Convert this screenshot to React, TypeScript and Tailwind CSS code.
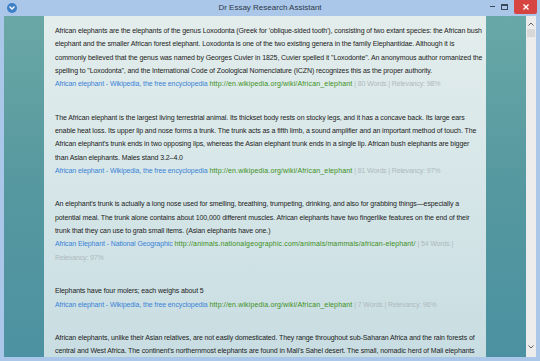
import React from "react"

interface Result {
  lines: string[]
  title: string
  url: string
  words: number
  relevancy: number
  wrapMeta?: boolean
}

const results: Result[] = [
  {
    lines: [
      "African elephants are the elephants of the genus Loxodonta (Greek for 'oblique-sided tooth'), consisting of two extant species: the African bush",
      "elephant and the smaller African forest elephant. Loxodonta is one of the two existing genera in the family Elephantidae. Although it is",
      "commonly believed that the genus was named by Georges Cuvier in 1825, Cuvier spelled it \"Loxodonte\". An anonymous author romanized the",
      "spelling to \"Loxodonta\", and the International Code of Zoological Nomenclature (ICZN) recognizes this as the proper authority.",
    ],
    title: "African elephant - Wikipedia, the free encyclopedia",
    url: "http://en.wikipedia.org/wiki/African_elephant",
    words: 80,
    relevancy: 98,
  },
  {
    lines: [
      "The African elephant is the largest living terrestrial animal. Its thickset body rests on stocky legs, and it has a concave back. Its large ears",
      "enable heat loss. Its upper lip and nose forms a trunk. The trunk acts as a fifth limb, a sound amplifier and an important method of touch. The",
      "African elephant's trunk ends in two opposing lips, whereas the Asian elephant trunk ends in a single lip. African bush elephants are bigger",
      "than Asian elephants. Males stand 3.2–4.0",
    ],
    title: "African elephant - Wikipedia, the free encyclopedia",
    url: "http://en.wikipedia.org/wiki/African_elephant",
    words: 81,
    relevancy: 97,
  },
  {
    lines: [
      "An elephant's trunk is actually a long nose used for smelling, breathing, trumpeting, drinking, and also for grabbing things—especially a",
      "potential meal. The trunk alone contains about 100,000 different muscles. African elephants have two fingerlike features on the end of their",
      "trunk that they can use to grab small items. (Asian elephants have one.)",
    ],
    title: "African Elephant - National Geographic",
    url: "http://animals.nationalgeographic.com/animals/mammals/african-elephant/",
    words: 54,
    relevancy: 97,
    wrapMeta: true,
  },
  {
    lines: ["Elephants have four molers; each weighs about 5"],
    title: "African elephant - Wikipedia, the free encyclopedia",
    url: "http://en.wikipedia.org/wiki/African_elephant",
    words: 7,
    relevancy: 96,
  },
  {
    lines: [
      "African elephants, unlike their Asian relatives, are not easily domesticated. They range throughout sub-Saharan Africa and the rain forests of",
      "central and West Africa. The continent's northernmost elephants are found in Mali's Sahel desert. The small, nomadic herd of Mali elephants",
    ],
    title: "",
    url: "",
    words: 0,
    relevancy: 0,
  },
]

function ResultBlock({ r }: { r: Result }) {
  return (
    <div className="mb-[20px]">
      {r.lines.map((l, i) => (
        <div key={i} className="whitespace-nowrap tracking-[-0.1px] text-[#222]">
          {l}
        </div>
      ))}
      {r.title && (
        <div className="whitespace-nowrap">
          <span className="tracking-[-0.1px] text-[#3b82d6]">{r.title}</span>{" "}
          <span className="tracking-[0.15px] text-[#3d8f22]">{r.url}</span>{" "}
          <span className="tracking-[-0.15px] text-[#aeb9be]">
            | {r.words} Words |{r.wrapMeta ? null : ` Relevancy: ${r.relevancy}%`}
          </span>
        </div>
      )}
      {r.title && r.wrapMeta && <div className="tracking-[-0.15px] text-[#aeb9be]">Relevancy: {r.relevancy}%</div>}
    </div>
  )
}

export default function App() {
  return (
    <div
      className="flex h-[361px] w-[540px] flex-col overflow-hidden bg-[#aac6e8] px-[4px] pb-[4px]"
      style={{ fontFamily: "Tahoma, 'Liberation Sans', Arial, sans-serif" }}
    >
      {/* title bar */}
      <div className="relative flex h-[16px] shrink-0 items-center justify-center">
        <div className="absolute left-[3px] top-[3px] flex h-[10px] w-[10px] items-center justify-center rounded-full bg-[#3f7fc8]">
          <svg width="6" height="4" viewBox="0 0 6 4">
            <path d="M0.5 0.5 L3 3 L5.5 0.5" stroke="white" strokeWidth="1.3" fill="none" />
          </svg>
        </div>
        <span className="text-[8px] text-[#2d3a4a]">Dr Essay Research Assistant</span>
        <div className="absolute right-[-1px] top-0 flex items-start">
          <div className="mr-[6px] mt-[6px] h-[1px] w-[5px] bg-[#3a4a5a]" />
          <div className="mr-[6px] mt-[4px] h-[6px] w-[7px] border border-t-2 border-[#3a4a5a]" />
          <div className="flex h-[14px] w-[23px] items-center justify-center rounded-b-[2px] bg-[#d64541]">
            <svg width="6" height="6" viewBox="0 0 6 6">
              <path d="M0.5 0.5 L5.5 5.5 M5.5 0.5 L0.5 5.5" stroke="white" strokeWidth="1.4" />
            </svg>
          </div>
        </div>
      </div>

      {/* body */}
      <div className="flex min-h-0 flex-1">
        <div className="w-[40px] shrink-0 bg-gradient-to-b from-[#6aa8a6] via-[#56989f] to-[#4d92a2]" />
        <div className="min-w-0 flex-1 overflow-hidden bg-gradient-to-b from-[#e3edec] via-[#d6e6e8] to-[#c8dde2] pl-[11px] pt-[8px] text-[7px] leading-[13.35px]">
          {results.map((r, i) => (
            <ResultBlock key={i} r={r} />
          ))}
        </div>
        <div className="w-[40px] shrink-0 bg-gradient-to-b from-[#68a8a8] via-[#55989f] to-[#4b91a1]" />
        <div className="flex w-[10px] shrink-0 flex-col items-center bg-[#ececec]">
          <svg width="6" height="4" viewBox="0 0 6 4" className="mt-[6px]">
            <path d="M0.5 3.5 L3 1 L5.5 3.5" stroke="#606060" strokeWidth="1" fill="none" />
          </svg>
          <div className="mt-[3px] h-[8px] w-[8px] bg-[#d8d8d8]" />
          <div className="flex-1" />
          <svg width="6" height="4" viewBox="0 0 6 4" className="mb-[8px]">
            <path d="M0.5 0.5 L3 3 L5.5 0.5" stroke="#606060" strokeWidth="1" fill="none" />
          </svg>
        </div>
      </div>
    </div>
  )
}
